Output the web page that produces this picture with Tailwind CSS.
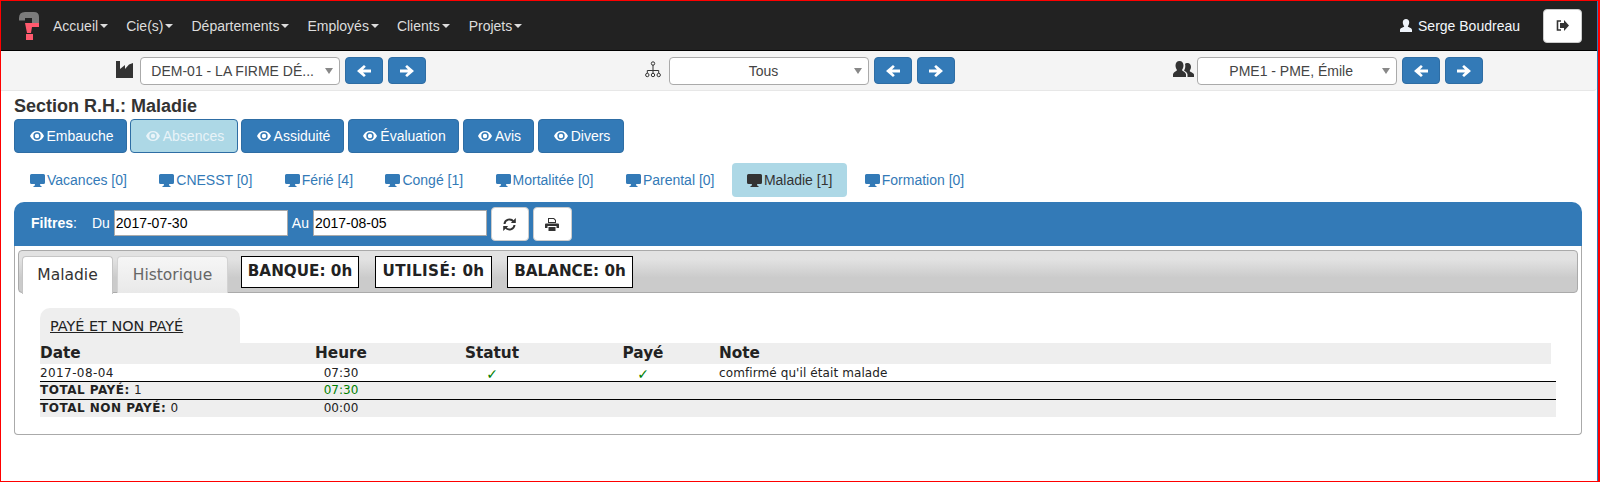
<!DOCTYPE html>
<html lang="fr">
  <head>
    <meta charset="UTF-8" />
    <title>Section R.H.: Maladie</title>
    <script src="https://cdn.jsdelivr.net/npm/@tailwindcss/browser@4"></script>
  </head>
  <body class="bg-white">
    <svg class="hidden">
      <symbol id="eye" viewBox="0 0 14 10"><path fill-rule="evenodd" fill="currentColor" d="M7 0C3.900 0 1.300 1.900 0 5c1.300 3.100 3.900 5 7 5s5.700-1.900 7-5C12.700 1.900 10.100 0 7 0zM7 1.300A3.700 3.700 0 1 1 7 8.700 3.700 3.700 0 0 1 7 1.300zM7 2.800A2.200 2.200 0 1 0 7 7.200 2.200 2.200 0 0 0 7 2.800z"/></symbol>
      <symbol id="screen" viewBox="0 0 15 13"><path fill="currentColor" d="M1.500 0h12A1.500 1.500 0 0 1 15 1.500v7A1.500 1.500 0 0 1 13.500 10H10l.5 2h1v1h-8v-1h1l.5-2H1.500A1.500 1.500 0 0 1 0 8.500v-7A1.500 1.500 0 0 1 1.500 0z"/></symbol>
      <symbol id="left" viewBox="0 0 14 14"><path fill="currentColor" d="M7 1l1.800 1.800L6 5.500h8v3H6l2.800 2.700L7 13 0 7z"/></symbol>
      <symbol id="right" viewBox="0 0 14 14"><path fill="currentColor" d="M7 1L5.200 2.800 8 5.500H0v3h8l-2.800 2.700L7 13l7-6z"/></symbol>
    </svg>

    <div class="h-[482px] w-[1600px] border-t border-b border-l border-r-2 border-[#f00] overflow-hidden font-['Liberation_Sans',Arial,sans-serif] text-sm text-[#333]">
      <div class="h-full border-r border-[#337ab7]">
        <!-- barre du haut -->
        <nav class="h-[50px] bg-[#222] border-b border-black flex items-center text-[#ddd] pl-[17px] pr-[15px]">
          <svg class="w-[22px] h-[30px] mt-[1px] blur-[0.5px]" viewBox="0 0 22 30">
            <path fill="#7b7b7b" d="M1 7Q1 1 7 1h9q5 0 5 5v6h-7V7H7v2.500H1z"/>
            <path fill="#ff5a6e" d="M7 12h14v4H14l-1 6H9z"/>
            <rect fill="#ff5a6e" x="8" y="23" width="7" height="6"/>
          </svg>
          <a class="ml-[13px] flex items-center">Accueil<span class="ml-[2px] border-x-4 border-t-4 border-x-transparent border-t-[#ddd]"></span></a>
          <a class="ml-[18px] flex items-center">Cie(s)<span class="ml-[2px] border-x-4 border-t-4 border-x-transparent border-t-[#ddd]"></span></a>
          <a class="ml-[18px] flex items-center">Départements<span class="ml-[2px] border-x-4 border-t-4 border-x-transparent border-t-[#ddd]"></span></a>
          <a class="ml-[18px] flex items-center">Employés<span class="ml-[2px] border-x-4 border-t-4 border-x-transparent border-t-[#ddd]"></span></a>
          <a class="ml-[18px] flex items-center">Clients<span class="ml-[2px] border-x-4 border-t-4 border-x-transparent border-t-[#ddd]"></span></a>
          <a class="ml-[19px] flex items-center">Projets<span class="ml-[2px] border-x-4 border-t-4 border-x-transparent border-t-[#ddd]"></span></a>
          <svg class="ml-auto w-[12px] h-[13px] text-[#eef3fa]" viewBox="0 0 12 13"><path fill="currentColor" d="M6 0a3.200 3.200 0 0 1 3.200 3.500C9.200 5.500 8 7 7.800 7.500c0 .6 4.200 1.300 4.200 3.500v2H0v-2c0-2.200 4.200-2.900 4.200-3.500C4 7 2.800 5.500 2.800 3.500A3.200 3.200 0 0 1 6 0z"/></svg>
          <span class="ml-[6px] text-[#f4f8fc]">Serge Boudreau</span>
          <button class="ml-[23px] w-[39px] h-[34px] bg-white border border-[#ccc] rounded flex items-center justify-center text-[#333]">
            <svg class="w-[13px] h-[11px]" viewBox="0 0 13 11"><path fill="none" stroke="currentColor" stroke-width="1.600" d="M5 1H1.500v9H5"/><path fill="currentColor" d="M8 0l5 5.500L8 11V8H4V3h4z"/></svg>
          </button>
        </nav>

        <!-- sélecteurs -->
        <div class="h-[40px] bg-[#f4f4f4] border-b border-[#e7e7e7] rounded-br pl-[6px] pr-[4px] grid grid-cols-3 items-center">
          <div class="flex items-center justify-center">
            <svg class="w-[17px] h-[17px] text-[#333] mr-[7px] mb-[3px]" viewBox="0 0 17 17"><path fill="currentColor" d="M0 0h4v8l5-4v4l4-4.500 4-1.500V17H0z"/></svg>
            <div class="w-[200px] h-[28px] bg-white border border-[#aaa] rounded flex items-center pl-[10px] pr-[6px] text-[#444]">
              <span class="flex-1">DEM-01 - LA FIRME DÉ...</span>
              <span class="border-x-4 border-t-[6px] border-x-transparent border-t-[#888]"></span>
            </div>
            <button class="ml-[5px] w-[38px] h-[27px] bg-[#337ab7] border border-[#2e6da4] rounded text-white flex items-center justify-center"><svg class="w-[14px] h-[14px]"><use href="#left"/></svg></button>
            <button class="ml-[5px] w-[38px] h-[27px] bg-[#337ab7] border border-[#2e6da4] rounded text-white flex items-center justify-center"><svg class="w-[14px] h-[14px]"><use href="#right"/></svg></button>
          </div>
          <div class="flex items-center justify-center">
            <svg class="w-[16px] h-[17px] text-[#333] mr-[8px] mb-[2px]" viewBox="0 0 16 17"><g fill="none" stroke="currentColor"><circle cx="8" cy="2.500" r="1.700"/><circle cx="2.300" cy="14" r="1.700"/><circle cx="8" cy="14" r="1.700"/><circle cx="13.700" cy="14" r="1.700"/><path d="M8 4v8M2.300 12V9.500h11.400V12"/></g></svg>
            <div class="w-[200px] h-[28px] bg-white border border-[#aaa] rounded flex items-center pl-[11px] pr-[6px] text-[#444]">
              <span class="flex-1 text-center pr-[8px]">Tous</span>
              <span class="border-x-4 border-t-[6px] border-x-transparent border-t-[#888]"></span>
            </div>
            <button class="ml-[5px] w-[38px] h-[27px] bg-[#337ab7] border border-[#2e6da4] rounded text-white flex items-center justify-center"><svg class="w-[14px] h-[14px]"><use href="#left"/></svg></button>
            <button class="ml-[5px] w-[38px] h-[27px] bg-[#337ab7] border border-[#2e6da4] rounded text-white flex items-center justify-center"><svg class="w-[14px] h-[14px]"><use href="#right"/></svg></button>
          </div>
          <div class="flex items-center justify-center pr-[2px]">
            <svg class="w-[21px] h-[16px] text-[#333] mr-[3px] mb-[3px]" viewBox="0 0 21 16"><path fill="currentColor" d="M6.500 0C9 0 10.500 2 10.500 4.500c0 2-1 3.500-1.500 4.500 0 1 4 2 4 4.500V16H0v-2.500C0 11 4 10 4 9 3.500 8 2.500 6.500 2.500 4.500 2.500 2 4 0 6.500 0zM14.500 2C16.800 2 18 3.800 18 6c0 1.800-1 3-1.300 4 0 .8 4.300 1.800 4.300 3.800V16h-6.500v-2.500c0-2-2.500-3.200-3.500-4 .8-1.300 1.300-2.800 1.300-4.500 0-.7-.1-1.400-.3-2C12.500 2.400 13.400 2 14.500 2z"/></svg>
            <div class="w-[200px] h-[28px] bg-white border border-[#aaa] rounded flex items-center pl-[11px] pr-[6px] text-[#444]">
              <span class="flex-1 text-center pr-[8px]">PME1 - PME, Émile</span>
              <span class="border-x-4 border-t-[6px] border-x-transparent border-t-[#888]"></span>
            </div>
            <button class="ml-[5px] w-[38px] h-[27px] bg-[#337ab7] border border-[#2e6da4] rounded text-white flex items-center justify-center"><svg class="w-[14px] h-[14px]"><use href="#left"/></svg></button>
            <button class="ml-[5px] w-[38px] h-[27px] bg-[#337ab7] border border-[#2e6da4] rounded text-white flex items-center justify-center"><svg class="w-[14px] h-[14px]"><use href="#right"/></svg></button>
          </div>
        </div>

        <div class="pl-[13px] pr-[15px]">
          <h1 class="h-[28px] font-bold text-[18px] leading-[30px]">Section R.H.: Maladie</h1>

          <!-- sections -->
          <div class="flex gap-[3px] text-white">
            <a class="w-[113px] h-[34px] pl-[2px] bg-[#337ab7] border border-[#2e6da4] rounded flex items-center justify-center"><svg class="w-[14px] h-[10px] mr-[3px]"><use href="#eye"/></svg>Embauche</a>
            <a class="w-[108px] h-[34px] pl-[2px] bg-[#add8e6] border border-[#2e6da4] rounded flex items-center justify-center text-[#e8f3f8]"><svg class="w-[14px] h-[10px] mr-[3px]"><use href="#eye"/></svg>Absences</a>
            <a class="w-[103px] h-[34px] pl-[2px] bg-[#337ab7] border border-[#2e6da4] rounded flex items-center justify-center"><svg class="w-[14px] h-[10px] mr-[3px]"><use href="#eye"/></svg>Assiduité</a>
            <a class="ml-[1px] w-[111px] h-[34px] pl-[2px] bg-[#337ab7] border border-[#2e6da4] rounded flex items-center justify-center"><svg class="w-[14px] h-[10px] mr-[3px]"><use href="#eye"/></svg>Évaluation</a>
            <a class="ml-[1px] w-[71px] h-[34px] pl-[2px] bg-[#337ab7] border border-[#2e6da4] rounded flex items-center justify-center"><svg class="w-[14px] h-[10px] mr-[3px]"><use href="#eye"/></svg>Avis</a>
            <a class="ml-[1px] w-[86px] h-[34px] pl-[2px] bg-[#337ab7] border border-[#2e6da4] rounded flex items-center justify-center"><svg class="w-[14px] h-[10px] mr-[3px]"><use href="#eye"/></svg>Divers</a>
          </div>

          <!-- onglets -->
          <div class="mt-[10px] ml-[1px] flex gap-[2.4px] text-[#337ab7]">
            <a class="h-[34px] px-[15px] flex items-center rounded"><svg class="w-[15px] h-[13px] mr-[2px]"><use href="#screen"/></svg>Vacances [0]</a>
            <a class="h-[34px] px-[15px] flex items-center rounded"><svg class="w-[15px] h-[13px] mr-[2px]"><use href="#screen"/></svg>CNESST [0]</a>
            <a class="h-[34px] px-[15px] flex items-center rounded"><svg class="w-[15px] h-[13px] mr-[2px]"><use href="#screen"/></svg>Férié [4]</a>
            <a class="h-[34px] px-[15px] flex items-center rounded"><svg class="w-[15px] h-[13px] mr-[2px]"><use href="#screen"/></svg>Congé [1]</a>
            <a class="h-[34px] px-[15px] flex items-center rounded"><svg class="w-[15px] h-[13px] mr-[2px]"><use href="#screen"/></svg>Mortalitée [0]</a>
            <a class="h-[34px] px-[15px] flex items-center rounded"><svg class="w-[15px] h-[13px] mr-[2px]"><use href="#screen"/></svg>Parental [0]</a>
            <a class="h-[34px] px-[15px] flex items-center rounded bg-[#add8e6] text-[#333]"><svg class="w-[15px] h-[13px] mr-[2px]"><use href="#screen"/></svg>Maladie [1]</a>
            <a class="h-[34px] px-[15px] flex items-center rounded"><svg class="w-[15px] h-[13px] mr-[2px]"><use href="#screen"/></svg>Formation [0]</a>
          </div>

          <!-- filtres -->
          <div class="mt-[5px] h-[44px] bg-[#337ab7] rounded-t-[10px] flex items-center text-white pl-[17px]">
            <span class="mb-[2px]"><b>Filtres</b>:</span>
            <span class="ml-[15px] mb-[2px]">Du</span>
            <input class="ml-[4px] mb-[2px] w-[174px] h-[26px] bg-white border border-[#aaa] px-[1px] text-black" value="2017-07-30" />
            <span class="ml-[4px] mb-[2px]">Au</span>
            <input class="ml-[4px] mb-[2px] w-[174px] h-[26px] bg-white border border-[#aaa] px-[1px] text-black" value="2017-08-05" />
            <button class="ml-[4px] w-[38px] h-[34px] bg-white border border-[#ccc] rounded flex items-center justify-center text-[#333]">
              <svg class="w-[13px] h-[13px]" viewBox="0 0 13 13"><path fill="none" stroke="currentColor" stroke-width="2" d="M1.500 6A5 5 0 0 1 10.500 3.500M11.500 7A5 5 0 0 1 2.500 9.500"/><path fill="currentColor" d="M12.800 0v5h-5zM.200 13V8h5z"/></svg>
            </button>
            <button class="ml-[4px] w-[39px] h-[34px] bg-white border border-[#ccc] rounded flex items-center justify-center text-[#333]">
              <svg class="w-[14px] h-[13px]" viewBox="0 0 14 13"><path fill="currentColor" d="M3 0h6l2 2v3H3zM4 1v3h6V2.500L8.500 1zM1 5.500h12a1 1 0 0 1 1 1V10h-2.500V8h-9v2H0V6.500a1 1 0 0 1 1-1zM3.500 9h7v4h-7z"/></svg>
            </button>
          </div>

          <!-- panneau -->
          <div class="h-[189px] border border-t-0 border-[#aaa] rounded-b pt-[4px] px-[3px] font-['DejaVu_Sans',Verdana,sans-serif]">
            <div class="h-[43px] border border-[#aaa] rounded bg-linear-to-b from-[#e2e2e2] from-20% to-[#cbcbcb] to-65% flex pl-[3px]">
              <a class="mt-[5px] w-[91px] h-[38px] bg-white border border-b-0 border-[#c5c5c5] rounded-t flex items-center justify-center text-[15.5px] text-[#333]">Maladie</a>
              <a class="mt-[5px] ml-[4px] w-[111px] h-[37px] bg-linear-to-b from-[#f6f6f6] to-[#e9e9e9] border border-b-0 border-[#d3d3d3] rounded-t flex items-center justify-center text-[15.5px] text-[#666]">Historique</a>
              <span class="mt-[5px] ml-[13px] w-[118px] h-[32px] bg-white border border-black flex items-center justify-center font-bold text-[15.2px] text-[#222]">BANQUE: 0h</span>
              <span class="mt-[5px] ml-[16px] w-[117px] h-[32px] bg-white border border-black flex items-center justify-center font-bold text-[15.2px] tracking-[0.4px] text-[#222]">UTILISÉ: 0h</span>
              <span class="mt-[5px] ml-[15px] w-[126px] h-[32px] bg-white border border-black flex items-center justify-center font-bold text-[15.2px] text-[#222]">BALANCE: 0h</span>
            </div>

            <div class="mt-[15px] ml-[22px] text-[12px] text-[#222]">
              <div class="w-[200px] h-[35px] bg-[#eee] rounded-t-[10px] pl-[10px] pt-[2px] flex items-center"><a class="underline text-[14.4px]">PAYÉ ET NON PAYÉ</a></div>
              <div class="w-[1511px] h-[21px] bg-[#eee] grid grid-cols-[240px_122px_180px_122px_1fr] items-center font-bold text-[15.3px]">
                <span>Date</span><span class="text-center">Heure</span><span class="text-center">Statut</span><span class="text-center">Payé</span><span class="pl-[15px]">Note</span>
              </div>
              <div class="w-[1516px] h-[18px] border-b border-black grid grid-cols-[240px_122px_180px_122px_1fr] items-center">
                <span class="tracking-[0.4px]">2017-08-04</span><span class="text-center">07:30</span><span class="text-center text-[14px] text-[#008000]">✓</span><span class="text-center text-[14px] text-[#008000]">✓</span><span class="pl-[15px] tracking-[0.1px]">comfirmé qu'il était malade</span>
              </div>
              <div class="w-[1516px] h-[18px] bg-[#eee] border-b border-black grid grid-cols-[240px_122px_180px_122px_1fr] items-center">
                <span class="tracking-[0.5px]"><b>TOTAL PAYÉ:</b> 1</span><span class="text-center text-[#008000]">07:30</span>
              </div>
              <div class="w-[1516px] h-[17px] bg-[#eee] grid grid-cols-[240px_122px_180px_122px_1fr] items-center">
                <span class="tracking-[0.5px]"><b>TOTAL NON PAYÉ:</b> 0</span><span class="text-center">00:00</span>
              </div>
            </div>
          </div>
        </div>
      </div>
    </div>
  </body>
</html>
